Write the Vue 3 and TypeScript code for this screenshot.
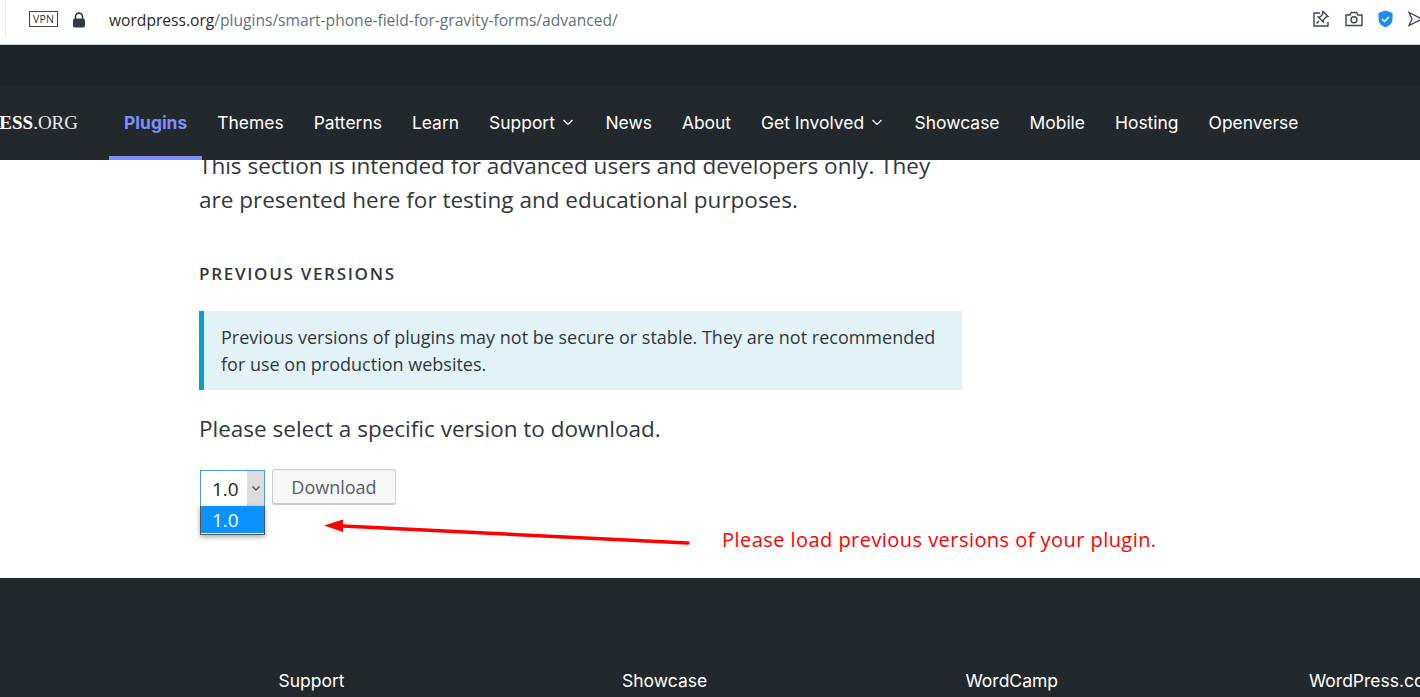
<script setup lang="ts">
interface NavItem { label: string; active?: boolean; caret?: boolean }
const navItems: NavItem[] = [
  { label: 'Plugins', active: true },
  { label: 'Themes' },
  { label: 'Patterns' },
  { label: 'Learn' },
  { label: 'Support', caret: true },
  { label: 'News' },
  { label: 'About' },
  { label: 'Get Involved', caret: true },
  { label: 'Showcase' },
  { label: 'Mobile' },
  { label: 'Hosting' },
  { label: 'Openverse' },
]
const footerCols: string[] = ['Support', 'Showcase', 'WordCamp', 'WordPress.com']
</script>

<template>
  <div class="page">
    <div class="browser">
      <div class="edge"></div>
      <span class="vpn">VPN</span>
      <svg class="lock" width="14" height="16" viewBox="0 0 14 16">
        <path d="M3.500 7V4.600a3.500 3.500 0 0 1 7 0V7" fill="none" stroke="#2f3b47" stroke-width="1.600" />
        <rect x="1" y="6.500" width="12" height="9" rx="2" fill="#2f3b47" />
      </svg>
      <div class="url"><span class="host">wordpress.org</span>/plugins/smart-phone-field-for-gravity-forms/advanced/</div>
      <div class="tools">
        <svg width="18" height="18" viewBox="0 0 18 18" fill="none" stroke="#3f4650" stroke-width="1.400">
          <path d="M8 3H2v13h14v-4" />
          <path d="M11 1.500l5 5-2 .6-2.500 2.600-.3 2.300-5-5 2.300-.4 2.100-2.500z" />
          <path d="M7 11l-2.500 2.500" />
        </svg>
        <svg width="18" height="16" viewBox="0 0 18 16" fill="none" stroke="#3f4650" stroke-width="1.400">
          <path d="M1 4h4l1.500-2.500h5L13 4h4v10.500H1z" />
          <circle cx="9" cy="8.800" r="3" />
        </svg>
        <svg width="15" height="18" viewBox="0 0 15 18">
          <path d="M7.500 0.500l7 2.500v6c0 4-3 7-7 8.500C3.500 16 .5 13 .5 9V3z" fill="#1a8cf0" />
          <path d="M4 9l2.500 2.500L11 7" fill="none" stroke="#fff" stroke-width="1.500" />
        </svg>
        <svg class="send" width="14" height="16" viewBox="0 0 14 16" fill="none" stroke="#3f4650" stroke-width="1.300">
          <path d="M1 1.500l13 6.500-13 6.500 3-6.500z" />
        </svg>
      </div>
    </div>

    <header class="masthead">
      <div class="navbar">
        <div class="logo"><span class="logo-word">WORDPRESS</span><span>.ORG</span></div>
        <nav class="nav">
          <a v-for="item in navItems" :key="item.label" class="nav-item" :class="{ active: item.active }">
            {{ item.label }}
            <svg v-if="item.caret" class="caret" width="12" height="7" viewBox="0 0 12 7" fill="none" stroke="#fff" stroke-width="1.200">
              <path d="M1.500 1L6 5.500 10.500 1" />
            </svg>
          </a>
        </nav>
      </div>
    </header>

    <main class="main">
      <div class="content">
        <p class="intro">This section is intended for advanced users and developers only. They are presented here for testing and educational purposes.</p>
        <h2 class="heading">PREVIOUS VERSIONS</h2>
        <div class="notice">Previous versions of plugins may not be secure or stable. They are not recommended for use on production websites.</div>
        <p class="select-line">Please select a specific version to download.</p>
        <div class="controls">
          <div class="select">
            <span class="select-value">1.0</span>
            <span class="select-arrow">
              <svg width="8" height="5" viewBox="0 0 8 5" fill="none" stroke="#555" stroke-width="1.300"><path d="M.5.500L4 4 7.500.500" /></svg>
            </span>
            <div class="dropdown"><div class="option">1.0</div></div>
          </div>
          <button class="download">Download</button>
        </div>
      </div>
      <svg class="arrow" width="372" height="30" viewBox="0 0 372 30">
        <path d="M16 10.800L366 28" stroke="#f00" stroke-width="3.500" stroke-linecap="round" fill="none" />
        <path d="M2 10.500L21 4.500 21 17z" fill="#f00" />
      </svg>
      <div class="note">Please load previous versions of your plugin.</div>
    </main>

    <footer class="footer">
      <div v-for="col in footerCols" :key="col" class="footer-col">{{ col }}</div>
    </footer>
  </div>
</template>

<style>
html, body { margin: 0; overflow: hidden; background: #fff; }
</style>

<style scoped>
.page {
  width: 1420px;
  height: 697px;
  overflow: hidden;
  display: flex;
  flex-direction: column;
  font-family: "Open Sans", sans-serif;
  background: #fff;
}
.browser {
  height: 44px;
  flex: none;
  display: flex;
  align-items: center;
  position: relative;
  background: #fff;
  border-bottom: 1px solid #c4d0d4;
}
.edge {
  position: absolute;
  left: 5px;
  top: 0;
  height: 38px;
  width: 1px;
  background: #ececec;
}
.vpn {
  margin-left: 29px;
  margin-top: -6px;
  width: 27px;
  height: 14px;
  border: 1px solid #444;
  font-size: 10.500px;
  line-height: 14px;
  text-align: center;
  color: #333;
  letter-spacing: .2px;
}
.lock { margin-left: 14px; margin-top: -5px; }
.url {
  margin-left: 23px;
  margin-top: -4px;
  font-size: 15.600px;
  color: #5f7180;
  white-space: nowrap;
}
.host { color: #2a2a2a; }
.tools {
  position: absolute;
  left: 1312px;
  top: 10px;
  display: flex;
  align-items: center;
  gap: 15px;
}
.masthead {
  height: 115px;
  flex: none;
  background: #1d2327;
  position: relative;
  z-index: 2;
  display: flex;
  flex-direction: column;
  justify-content: flex-end;
}
.navbar {
  height: 75px;
  background: #23282d;
  display: flex;
}
.logo {
  width: 78px;
  margin-right: 31px;
  flex: none;
  display: flex;
  justify-content: flex-end;
  align-items: center;
  overflow: hidden;
  white-space: nowrap;
  font-family: "Liberation Serif", serif;
  font-size: 19px;
  color: #fff;
}
.logo span { flex: none; font-weight: 400; color: #e8e8e8; }
.logo .logo-word { color: #fff; font-weight: 700; }
.nav { display: flex; }
.nav-item {
  padding: 4px 15px 0;
  display: flex;
  align-items: center;
  gap: 7px;
  font-family: Inter, sans-serif;
  font-size: 17.460px;
  color: #fff;
  white-space: nowrap;
  border-bottom: 4px solid transparent;
  box-sizing: border-box;
}
.nav-item.active {
  color: #7b90ff;
  font-weight: 700;
  border-bottom-color: #7b90ff;
}
.caret { margin-right: 1.500px; }
.main {
  height: 429px;
  margin-top: -11px;
  flex: none;
  position: relative;
  background: #fff;
  overflow: hidden;
}
.content {
  margin-left: 199px;
  width: 763px;
  color: #32373c;
}
.intro {
  margin: 0;
  font-size: 22.500px;
  line-height: 34px;
}
.heading {
  margin: 43px 0 0;
  font-size: 17px;
  line-height: 27px;
  font-weight: 600;
  letter-spacing: 1.700px;
}
.notice {
  margin-top: 24px;
  padding: 13px 20px 12px 17px;
  background: #e2f3f8;
  border-left: 5px solid #00a0d2;
  font-size: 18px;
  line-height: 27px;
}
.select-line {
  margin: 22px 0 0;
  font-size: 22.500px;
  line-height: 34px;
}
.controls {
  margin-top: 23px;
  display: flex;
  gap: 7px;
  align-items: flex-start;
}
.select {
  position: relative;
  margin-left: 1px;
  margin-top: 1px;
  width: 65px;
  height: 37px;
  box-sizing: border-box;
  border: 1px solid #4a9bdc;
  display: flex;
  font-size: 19px;
}
.select-value { flex: 1; line-height: 37px; padding-left: 11px; color: #222; }
.select-arrow {
  width: 17px;
  background: #dcdcdc;
  display: flex;
  align-items: center;
  justify-content: center;
}
.dropdown {
  position: absolute;
  left: -1px;
  top: 35px;
  width: 65px;
  box-sizing: border-box;
  border: 1px solid #555;
  border-top: 0;
  padding-bottom: 1px;
  box-shadow: 0 2px 5px rgba(0, 0, 0, .35);
  background: #fff;
}
.option {
  height: 27px;
  line-height: 29px;
  padding-left: 11px;
  background: #0a93ff;
  color: #fff;
}
.download {
  width: 124px;
  height: 36px;
  padding: 0;
  border: 1px solid #ccc;
  border-bottom-width: 2px;
  border-radius: 3px;
  background: #f7f7f7;
  color: #555d66;
  font-family: "Open Sans", sans-serif;
  font-size: 18px;
}
.arrow { position: absolute; left: 322px; top: 366px; }
.note {
  position: absolute;
  left: 722px;
  top: 375.500px;
  font-size: 20px;
  line-height: 30px;
  color: #f00;
  letter-spacing: .45px;
  white-space: nowrap;
}
.footer {
  flex: 1;
  background: #23282d;
  padding: 91px 0 0 278.500px;
  display: flex;
  overflow: hidden;
}
.footer-col {
  flex: none;
  width: 343.500px;
  font-family: Inter, sans-serif;
  font-size: 17.500px;
  line-height: 24px;
  color: #fff;
  white-space: nowrap;
}
</style>
